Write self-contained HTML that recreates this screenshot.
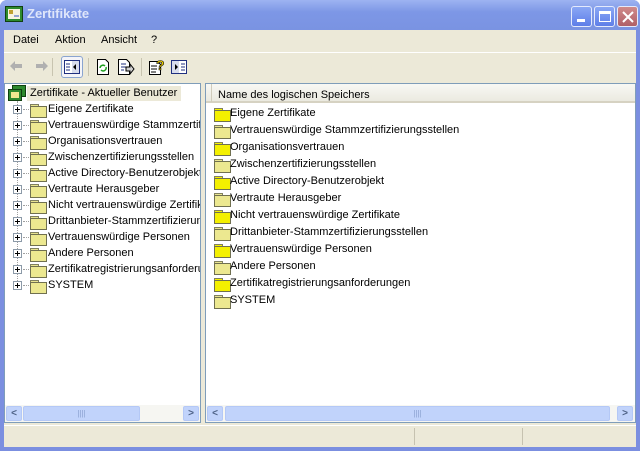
<!DOCTYPE html><html><head><style>
*{margin:0;padding:0;box-sizing:border-box}
body{width:640px;height:451px;overflow:hidden;background:#fff;font-family:Tahoma,"Liberation Sans",sans-serif;font-size:11px;color:#000;position:relative}
.abs{position:absolute}
#win{left:0;top:0;width:640px;height:451px;background:#7b8fe0;border-radius:7px 7px 0 0}
#title{left:0;top:0;width:640px;height:30px;background:linear-gradient(#9db3f2,#7d97e6 40%,#7a93e2);border-radius:7px 7px 0 0}
#title span{position:absolute;left:27px;top:6px;color:#dfe6fb;font:bold 13px "Liberation Sans",sans-serif}
.tb{top:6px;width:21px;height:21px;border:1px solid #e4eafc;border-radius:3px;background:linear-gradient(#8aa7f5,#5e7ee8)}
#client{left:4px;top:30px;width:632px;height:417px;background:#ece9d8}
.menu{top:34px;font-size:11px}
.pane{background:#fff;border:1px solid #7f9db9}
.fold{position:absolute;width:15px;height:12px}
.fold:before{content:"";position:absolute;left:0;top:0;width:7px;height:3px;border:1px solid #808060;border-bottom:none;background:#e8e490}
.fold:after{content:"";position:absolute;left:0;top:2px;width:15px;height:10px;border:1px solid #707050;background:#ece890}
.y:after{background:#f4f000}
.y:before{background:#f4f000}
.plus{position:absolute;width:9px;height:9px;border:1px solid #8c9aa8;background:#fff}
.plus:before{content:"";position:absolute;left:1px;top:3px;width:5px;height:1px;background:#000}
.plus:after{content:"";position:absolute;left:3px;top:1px;width:1px;height:5px;background:#000}
.t{position:absolute;white-space:nowrap;line-height:13px}
.sb{background:#c1d3fb;border:1px solid #b4c8f6;border-radius:2px}
</style></head><body>
<div id="win" class="abs"></div>
<div id="title" class="abs"><svg class="abs" style="left:5px;top:6px" width="18" height="16"><rect x="0.5" y="0.5" width="17" height="15" fill="#2e8a2e" stroke="#104010"/><rect x="3" y="3" width="12" height="10" fill="#f8f4e0"/><rect x="4" y="4" width="4" height="4" fill="#c0a030"/><path d="M9 10h5" stroke="#3050c0"/></svg><span>Zertifikate</span></div>
<div class="abs tb" style="left:571px"><div class="abs" style="left:5px;top:12px;width:8px;height:3px;background:#fff"></div></div>
<div class="abs tb" style="left:594px"><div class="abs" style="left:4px;top:4px;width:12px;height:11px;border:1px solid #fff;border-top-width:3px"></div></div>
<div class="abs tb" style="left:617px;background:linear-gradient(#d08a8a,#b06068)"><svg class="abs" style="left:4px;top:4px" width="12" height="12"><path d="M1 1L11 11M11 1L1 11" stroke="#fff" stroke-width="2"/></svg></div>
<div id="client" class="abs"></div>
<div class="abs" style="left:4px;top:52px;width:632px;height:1px;background:#fff"></div>
<div class="t menu" style="left:13px">Datei</div><div class="t menu" style="left:55px">Aktion</div><div class="t menu" style="left:101px">Ansicht</div><div class="t menu" style="left:151px">?</div>
<svg class="abs" style="left:9px;top:60px" width="40" height="12"><path d="M1 6l5-5v3h7v4h-7v3z" fill="#b0b0b0"/><path d="M39 6l-5-5v3h-7v4h7v3z" fill="#b0b0b0"/></svg>
<div class="abs" style="left:52px;top:58px;width:1px;height:18px;background:#c8c4b0"></div>
<div class="abs" style="left:61px;top:56px;width:22px;height:22px;border:1px solid #8aa4d0;border-radius:3px;background:#f4f4f8"></div>
<svg class="abs" style="left:64px;top:59px" width="16" height="16"><rect x="0.5" y="1.5" width="15" height="13" fill="#fff" stroke="#203080"/><rect x="8" y="2" width="7" height="12" fill="#d8dcec"/><path d="M12 5v6l-3-3z" fill="#000"/><path d="M2 5h4M2 8h4M2 11h4" stroke="#203080"/></svg>
<div class="abs" style="left:88px;top:58px;width:1px;height:18px;background:#c8c4b0"></div>
<svg class="abs" style="left:95px;top:59px" width="16" height="16"><path d="M2.5 .5h8l3 3v12h-11z" fill="#fff" stroke="#000"/><path d="M5 9a3 3 0 0 1 5-2M11 8a3 3 0 0 1-5 3" stroke="#20a020" stroke-width="1.5" fill="none"/></svg>
<svg class="abs" style="left:117px;top:59px" width="18" height="16"><path d="M1.5 .5h8l3 3v12h-11z" fill="#fff" stroke="#000"/><path d="M4 5h5M4 8h5M4 11h3" stroke="#203080"/><path d="M9 8h4v-3l4 5-4 5v-3h-4z" fill="#d0d0d0" stroke="#000"/></svg>
<div class="abs" style="left:141px;top:58px;width:1px;height:18px;background:#c8c4b0"></div>
<svg class="abs" style="left:148px;top:58px" width="18" height="17"><path d="M1.5 3.5h8l3 3v10h-11z" fill="#fff" stroke="#000"/><path d="M3 8h6M3 11h6M3 14h5" stroke="#000"/><text x="8" y="12" font-size="14" font-weight="bold" fill="#f0d000" stroke="#000" stroke-width=".6" font-family="Liberation Sans">?</text></svg>
<svg class="abs" style="left:171px;top:59px" width="16" height="16"><rect x="0.5" y="1.5" width="15" height="13" fill="#fff" stroke="#203080"/><rect x="1" y="2" width="7" height="12" fill="#d8dcec"/><path d="M4 5v6l3-3z" fill="#000"/><path d="M10 5h4M10 8h4M10 11h4" stroke="#203080"/></svg>
<div class="abs pane" style="left:4px;top:83px;width:197px;height:340px"></div>
<div class="abs" style="left:5px;top:405px;width:195px;height:17px;background:#f6f6f2"></div>
<div class="abs sb" style="left:6px;top:406px;width:16px;height:15px;text-align:center;font-size:10px;font-weight:bold;color:#4d6185;line-height:14px">&lt;</div>
<div class="abs sb" style="left:23px;top:406px;width:117px;height:15px;text-align:center;color:#8aa0d0;font-size:8px;line-height:13px">||||</div>
<div class="abs sb" style="left:183px;top:406px;width:16px;height:15px;text-align:center;font-size:10px;font-weight:bold;color:#4d6185;line-height:14px">&gt;</div>
<svg class="abs" style="left:8px;top:85px" width="18" height="17"><rect x="4.5" y=".5" width="13" height="11" fill="#2e8a2e" stroke="#104010"/><rect x=".5" y="4.5" width="13" height="11" fill="#2e8a2e" stroke="#104010"/><rect x="3" y="7" width="8" height="6" fill="#f0e890"/></svg>
<div class="abs" style="left:27px;top:86px;width:154px;height:15px;background:#ece9d8"></div>
<div class="t" style="left:30px;top:87px">Zertifikate - Aktueller Benutzer</div>
<div class="abs" style="left:17px;top:101px;width:0;height:184px;border-left:1px dotted #a0a0a0"></div>
<div id="tree"></div>
<div class="abs" style="left:201px;top:83px;width:4px;height:340px;background:#ece9d8"></div>
<div class="abs pane" style="left:205px;top:83px;width:431px;height:340px"></div>
<div class="abs" style="left:206px;top:84px;width:429px;height:19px;background:linear-gradient(#f8f8f4,#ebeae0);border-bottom:2px solid #d6d2c2"></div>
<div class="abs" style="left:211px;top:84px;width:1px;height:18px;background:#d0ccbc"></div>
<div class="t" style="left:218px;top:89px">Name des logischen Speichers</div>
<div class="abs" style="left:206px;top:405px;width:429px;height:17px;background:#f6f6f2"></div>
<div class="abs sb" style="left:207px;top:406px;width:16px;height:15px;text-align:center;font-size:10px;font-weight:bold;color:#4d6185;line-height:14px">&lt;</div>
<div class="abs sb" style="left:225px;top:406px;width:385px;height:15px;text-align:center;color:#8aa0d0;font-size:8px;line-height:13px">||||</div>
<div class="abs sb" style="left:617px;top:406px;width:16px;height:15px;text-align:center;font-size:10px;font-weight:bold;color:#4d6185;line-height:14px">&gt;</div>
<div id="list"></div>
<div class="abs" style="left:4px;top:425px;width:632px;height:22px;background:#ece9d8;border-top:1px solid #fff"></div>
<div class="abs" style="left:414px;top:428px;width:1px;height:17px;background:#c6c2b0"></div>
<div class="abs" style="left:522px;top:428px;width:1px;height:17px;background:#c6c2b0"></div>
<script>
var n=["Eigene Zertifikate","Vertrauenswürdige Stammzertifizierungsstellen","Organisationsvertrauen","Zwischenzertifizierungsstellen","Active Directory-Benutzerobjekt","Vertraute Herausgeber","Nicht vertrauenswürdige Zertifikate","Drittanbieter-Stammzertifizierungsstellen","Vertrauenswürdige Personen","Andere Personen","Zertifikatregistrierungsanforderungen","SYSTEM"];
var h="",l="";
n.forEach(function(s,i){var y=102+16*i;
h+='<div class="plus" style="left:13px;top:'+(y+3)+'px"></div><div class="abs" style="left:23px;top:'+(y+7)+'px;width:6px;border-top:1px dotted #a0a0a0"></div><div class="fold" style="left:30px;top:'+(y+2)+'px"></div><div class="t" style="left:48px;top:'+(y+1)+'px;width:152px;overflow:hidden">'+s+'</div>';
var z=107+17*i;
l+='<div class="fold'+(i%2==0?' y':'')+'" style="left:214px;top:'+(z+1)+'px"></div><div class="t" style="left:230px;top:'+(z)+'px">'+s+'</div>';});
document.getElementById("tree").innerHTML=h;document.getElementById("list").innerHTML=l;
</script>
</body></html>
